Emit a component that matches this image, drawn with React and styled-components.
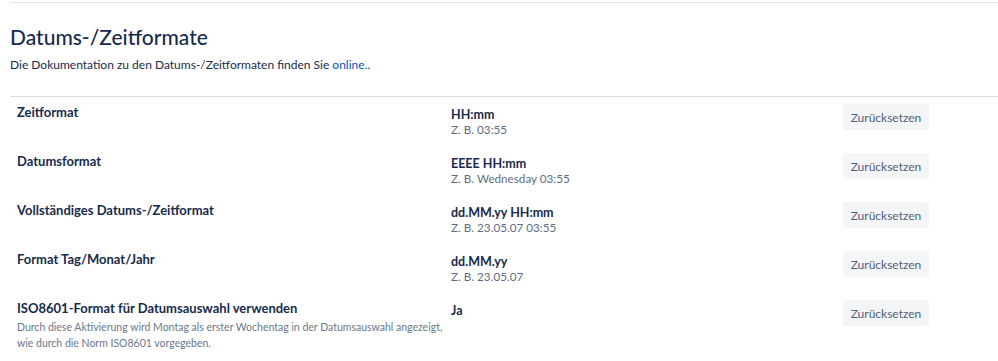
import React from 'react'
import styled, { createGlobalStyle } from 'styled-components'

const Global = createGlobalStyle`
  html, body {
    margin: 0;
    padding: 0;
    background: #fff;
  }
  body {
    font-family: Lato, "Noto Sans", "Liberation Sans", sans-serif;
    color: #172b4d;
  }
`

const Page = styled.div`
  padding: 2px 0 0 10px;
`

const Section = styled.section`
  border-top: 1px solid #e4e6ea;
`

const Header = styled.header`
  padding: 21px 0 23px;
  border-bottom: 1px solid #dcdfe4;
`

const Title = styled.h2`
  margin: 0;
  font-size: 21px;
  font-weight: 500;
  line-height: 26px;
  color: #172b4d;
`

const Intro = styled.p`
  margin: 7px 0 0;
  font-size: 12px;
  line-height: 16px;
  color: #172b4d;
`

const Link = styled.a`
  color: #0052cc;
  text-decoration: none;
`

const Table = styled.div`
  display: grid;
  grid-template-columns: 441px 392px auto;
`

const Row = styled.div`
  display: contents;
`

const Cell = styled.div`
  padding: 7px 0 0;
  min-height: ${p => (p.tall ? 52 : 42)}px;
  padding-left: ${p => p.indent || 0}px;
`

const Label = styled.div`
  font-size: 13px;
  font-weight: 700;
  line-height: 16px;
  color: #172b4d;
`

const Hint = styled.div`
  margin-top: 3px;
  font-size: 10.5px;
  line-height: 16px;
  color: #6b778c;
  max-width: 432px;
`

const Value = styled.div`
  margin-top: 4px;
  font-size: 12.5px;
  font-weight: 700;
  line-height: 14px;
  color: #172b4d;
`

const Example = styled.div`
  font-size: 11.7px;
  line-height: 15px;
  color: #5e6c84;
`

const ResetButton = styled.button`
  width: 86px;
  height: 26px;
  padding: 0;
  border: none;
  border-radius: 3px;
  background: #f4f5f7;
  color: #505f79;
  font-family: inherit;
  font-size: 12px;
  cursor: pointer;
`

const rows = [
  { label: 'Zeitformat', value: 'HH:mm', example: 'Z. B. 03:55' },
  { label: 'Datumsformat', value: 'EEEE HH:mm', example: 'Z. B. Wednesday 03:55' },
  { label: 'Vollständiges Datums-/Zeitformat', value: 'dd.MM.yy HH:mm', example: 'Z. B. 23.05.07 03:55' },
  { label: 'Format Tag/Monat/Jahr', value: 'dd.MM.yy', example: 'Z. B. 23.05.07' },
  {
    label: 'ISO8601-Format für Datumsauswahl verwenden',
    hint: 'Durch diese Aktivierung wird Montag als erster Wochentag in der Datumsauswahl angezeigt, wie durch die Norm ISO8601 vorgegeben.',
    value: 'Ja',
  },
]

export default function App() {
  return (
    <Page>
      <Global />
      <Section>
        <Header>
          <Title>Datums-/Zeitformate</Title>
          <Intro>
            Die Dokumentation zu den Datums-/Zeitformaten finden Sie <Link href="#">online.</Link>.
          </Intro>
        </Header>
        <Table>
          {rows.map(r => (
            <Row key={r.label}>
              <Cell indent={7} tall={!!r.hint}>
                <Label>{r.label}</Label>
                {r.hint && <Hint>{r.hint}</Hint>}
              </Cell>
              <Cell tall={!!r.hint}>
                <Value>{r.value}</Value>
                {r.example && <Example>{r.example}</Example>}
              </Cell>
              <Cell tall={!!r.hint}>
                <ResetButton>Zurücksetzen</ResetButton>
              </Cell>
            </Row>
          ))}
        </Table>
      </Section>
    </Page>
  )
}
